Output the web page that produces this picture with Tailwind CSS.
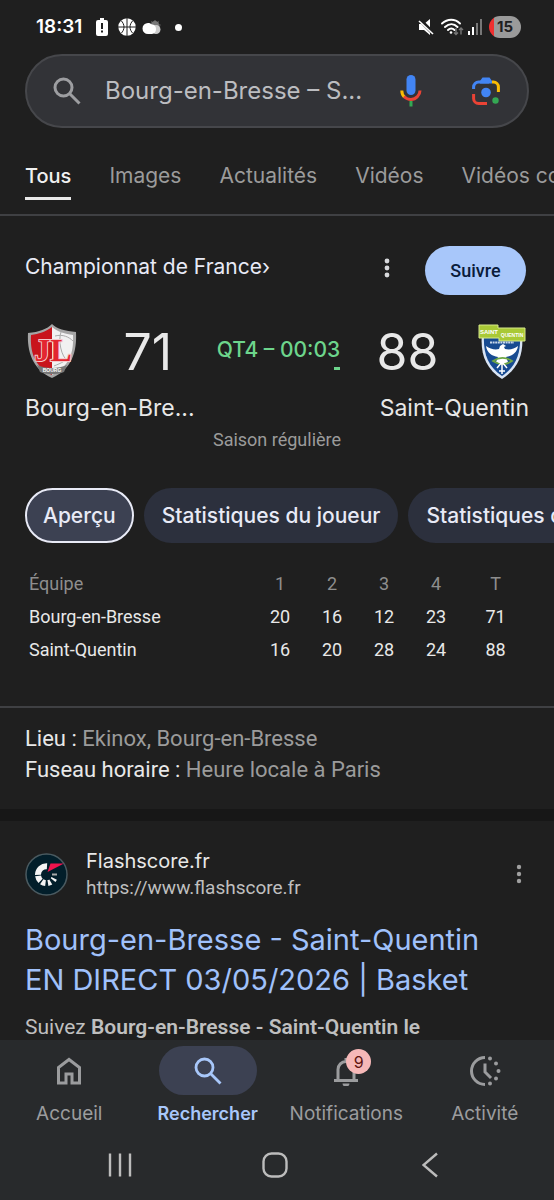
<!DOCTYPE html>
<html lang="fr" class="h-full">
  <head>
    <meta charset="utf-8" />
    <meta name="viewport" content="width=device-width, initial-scale=1" />
    <title>Bourg-en-Bresse – Saint-Quentin</title>
    <script src="https://cdn.jsdelivr.net/npm/@tailwindcss/browser@4"></script>
  </head>
  <body class="h-full bg-[#1f1f1f] font-['Roboto',sans-serif] text-[#e8e8e8]">
    <div class="flex h-full flex-col overflow-hidden">
      <!-- status bar -->
      <div class="flex h-[54px] shrink-0 items-center justify-between pl-9 pr-[33px] text-white">
        <div class="flex items-center">
          <span class="font-['Inter',sans-serif] text-[19px] font-semibold">18:31</span>
          <svg class="ml-3.5 h-[18px] w-3" viewBox="0 0 12 18">
            <path fill="#fff" d="M4 0h4v2h2a2 2 0 0 1 2 2v12a2 2 0 0 1-2 2H2a2 2 0 0 1-2-2V4a2 2 0 0 1 2-2h2z" />
            <path fill="#1f1f1f" d="M5 5h2v6H5zM5 12.500h2v2H5z" />
          </svg>
          <svg class="ml-2.5 size-[18px]" viewBox="0 0 18 18">
            <circle cx="9" cy="9" r="8.700" fill="#fff" />
            <path fill="none" stroke="#1f1f1f" stroke-width="1" d="M9 0v18M0 9h18M3 2.500c4 4 4 9 0 13M15 2.500c-4 4-4 9 0 13" />
          </svg>
          <svg class="ml-1.5 h-[18px] w-[19px]" viewBox="0 0 19 18">
            <circle cx="13" cy="7" r="4" fill="#777" />
            <path stroke="#777" d="M13 2v2M16.500 3.500l-1 1.500M9.500 3.500l1 1.500M18.500 7h-2" />
            <circle cx="14" cy="11.500" r="4.500" fill="#ccc" />
            <path fill="#fff" d="M6 16A5.500 5.500 0 0 1 6 5c1.500 0 2.500.4 3.500 1.200 3 .3 4.500 2.300 4.500 4.800 0 2.800-1.500 5-4 5z" />
          </svg>
          <span class="ml-3.5 size-[7px] rounded-full bg-white"></span>
        </div>
        <div class="flex items-center">
          <svg class="h-4 w-[17px]" viewBox="0 0 17 16">
            <path fill="#fff" d="M1 5h5l6-5v16l-6-5H1z" />
            <path stroke="#1f1f1f" stroke-width="4" d="M1 0l16 16" />
            <path stroke="#fff" stroke-width="1.600" d="M1 2l14 13" />
          </svg>
          <svg class="ml-1.5 h-[18px] w-[23px]" viewBox="0 0 23 18" fill="none">
            <path stroke="#fff" stroke-width="1.900" stroke-linecap="round" d="M1 5.500c5.500-5 13-5 18 0M4 9c4-3.600 9-3.600 12.500 0M7 12c2-2 4.500-2 6.500 0" />
            <circle cx="10" cy="14.500" r="1.300" fill="#fff" />
            <path stroke="#777" stroke-width="1.400" d="M15 10v6.500M13 14.500l2 2 2-2M20 16.500V10M18 12l2-2 2 2" />
          </svg>
          <svg class="ml-1 h-4 w-[15px]" viewBox="0 0 15 16">
            <path fill="#fff" d="M0 12h2v4H0zM4 8h2v8H4z" />
            <path fill="#777" d="M8 4h2v12H8zM12 0h2v16h-2z" />
          </svg>
          <span class="ml-1.5 rounded-full bg-linear-to-r from-[#ef3030] from-15% to-[#9a9a9a] to-15% px-2 font-['Inter',sans-serif] text-[15px] leading-[22px] font-bold text-[#1f1f1f]">15</span>
        </div>
      </div>

      <!-- search box -->
      <form class="mx-[25px] flex h-[74px] shrink-0 items-center rounded-full border-2 border-[#46474b] bg-[#323337] pl-6 pr-[26px]" onsubmit="return false">
        <svg class="h-8 w-8 shrink-0" viewBox="0 0 32 32" fill="none" stroke="#9d9ea1" stroke-width="3">
          <circle cx="12.500" cy="12.500" r="8.500" />
          <path d="M18.500 18.500l10 10" />
        </svg>
        <input class="ml-[22px] min-w-0 flex-1 bg-transparent font-['Inter',sans-serif] text-2xl text-[#bcbdc0] outline-none" type="text" aria-label="Rechercher" value="Bourg-en-Bresse – S..." />
        <button type="button" aria-label="Recherche vocale" class="ml-2 shrink-0">
          <svg class="h-8 w-6" viewBox="0 0 24 32" fill="none" stroke-width="3">
            <rect x="7.500" y="0" width="9" height="20" rx="4.500" fill="#4285f4" />
            <path stroke="#fbbc04" d="M2.800 15.500c0 3 1 5 2.600 6.600" />
            <path stroke="#ea4335" d="M5 21.500c4 4 10 4 13.500 0 1.700-1.700 2.500-3.500 2.500-6" />
            <path stroke="#34a853" d="M12 26v5.500" />
          </svg>
        </button>
        <button type="button" aria-label="Google Lens" class="ml-12 shrink-0">
          <svg class="h-[30px] w-[30px]" viewBox="0 0 30 30" fill="none" stroke-width="3">
            <path stroke="#4285f4" d="M2.600 13v-2a5 5 0 0 1 5-5H18" />
            <path fill="#4285f4" d="M9 5l2.500-3.500h7L21 5v2.500H9z" />
            <path stroke="#fbbc04" d="M21 6h1.400a5 5 0 0 1 5 5v5" />
            <path stroke="#ea4335" d="M2.600 18v4.400a5 5 0 0 0 5 5H16" />
            <circle cx="15" cy="16.500" r="4.800" fill="#4285f4" />
            <circle cx="24.500" cy="24.500" r="3.200" fill="#34a853" />
          </svg>
        </button>
      </form>

      <!-- result type tabs -->
      <nav class="flex h-[88px] shrink-0 gap-[38px] overflow-hidden border-b-2 border-[#3f4043] pl-[25px] pt-8 font-['Inter',sans-serif] text-[21px] leading-8 whitespace-nowrap text-[#9b9b9b]">
        <a href="#" class="h-10 border-b-3 border-[#e8e8e8] text-xl leading-8 font-medium text-[#f0f0f0]">Tous</a>
        <a href="#">Images</a>
        <a href="#">Actualités</a>
        <a href="#">Vidéos</a>
        <a href="#">Vidéos courtes</a>
      </nav>

      <main class="min-h-0 flex-1 overflow-hidden">
        <section>
          <div class="flex items-center pt-[30px] pl-[25px] pr-7">
            <a href="#" class="-mt-2 flex-1 font-['Inter',sans-serif] text-[21px] text-[#e8eaf6]">Championnat de France›</a>
            <button type="button" aria-label="Plus d'options" class="mr-8 -mt-1.5">
              <svg class="h-5 w-3" viewBox="0 0 12 20" fill="#d8d9dc">
                <circle cx="6" cy="3" r="2.400" /><circle cx="6" cy="10" r="2.400" /><circle cx="6" cy="17" r="2.400" />
              </svg>
            </button>
            <button type="button" class="h-[49px] w-[101px] rounded-full bg-[#a8c7fa] text-lg font-medium text-[#0a1c3a]">Suivre</button>
          </div>

          <div class="mt-[29px] flex items-center justify-between px-[25px]">
            <svg class="h-14 w-[54px]" viewBox="0 0 54 56">
              <path fill="#a5a5a5" d="M27 0c5 5 13 7 24 8 1 20-4 37-24 46C7 45 2 27 3 9 14 8 22 5 27 0z" />
              <path fill="#f1f1f1" d="M27 3c6 5 13 7 21 8 1 18-4 32-21 40z" />
              <path fill="#c8141c" d="M27 3C20 8 14 10 6 11c-1 18 4 32 21 40z" />
              <path fill="none" stroke="#aaa" d="M30 12c8-2 14 1 18 5M36 8c-3 8 0 25 7 29M29 42c7-3 13-5 17-12" />
              <text x="28" y="37" text-anchor="middle" font-family="Liberation Serif, serif" font-size="32" font-weight="700" fill="#e32630" stroke="#f3c9cb" stroke-width="2" paint-order="stroke">JL</text>
              <path fill="#777" d="M12 41c9 4 21 4 30 0l-3 7c-7 3-17 3-24 0z" />
              <text x="27" y="48" text-anchor="middle" font-family="Liberation Sans, sans-serif" font-size="5" font-weight="700" fill="#fff">BOURG</text>
            </svg>
            <span class="ml-2 font-['Inter',sans-serif] text-[50px] leading-[56px]">71</span>
            <span class="relative -mt-1 ml-2 font-['Inter',sans-serif] text-[21px] font-medium text-[#6dd58c]">QT4 – 00:03<span class="absolute right-0 -bottom-1 h-[3px] w-1.5 bg-[#6dd58c]"></span></span>
            <span class="font-['Inter',sans-serif] text-[50px] leading-[56px]">88</span>
            <svg class="h-14 w-[54px]" viewBox="0 0 54 56">
              <path fill="#d9e4f4" d="M7 9h40c2 20-3 35-20 46C10 44 5 29 7 9z" />
              <path fill="#174a91" d="M9 10h36c1 18-3 32-18 42C12 42 8 28 9 10z" />
              <path fill="#a9c936" stroke="#d7e98a" d="M4 1h19v3h27v13H24v-3H4z" />
              <text x="14" y="10" text-anchor="middle" font-family="Liberation Sans, sans-serif" font-size="6" font-weight="700" fill="#fff">SAINT</text>
              <text x="37" y="13" text-anchor="middle" font-family="Liberation Sans, sans-serif" font-size="5" font-weight="700" fill="#fff">QUENTIN</text>
              <path stroke="#c8d6ea" stroke-width="2" stroke-dasharray="2 .6" d="M15 18.500h24" />
              <path fill="#fff" d="M11 22c4 3 9 4 13 3l1-3 3-2 3 2-2 1 1 2c5 1 9 0 13-3-1 7-6 10-12 11l2 5-6 3-6-3 2-5c-6-1-11-4-12-11z" />
              <path fill="none" stroke="#6fa744" stroke-width="1.800" d="M18 37c6-4 13-4 19 0-6 4-13 4-19 0z" />
              <path stroke="#fff" stroke-width="1.500" d="M22 44l5-6 5 6M24 47h6M27 38v12" fill="none" />
            </svg>
          </div>
          <div class="mt-3 flex justify-between px-[25px] font-['Inter',sans-serif] text-[23px] leading-8">
            <span>Bourg-en-Bre...</span>
            <span>Saint-Quentin</span>
          </div>
          <p class="mt-0.5 text-center text-lg text-[#9b9b9b]">Saison régulière</p>

          <div class="mt-[34px] flex gap-2.5 overflow-hidden pl-[25px] font-['Inter',sans-serif] text-[21px] font-medium whitespace-nowrap text-[#e8eaf6]">
            <button type="button" class="h-[55px] shrink-0 rounded-full border-2 border-[#e8eaf6] bg-[#3c4152] px-4">Aperçu</button>
            <button type="button" class="h-[55px] shrink-0 rounded-full bg-[#2c303d] px-[18px]">Statistiques du joueur</button>
            <button type="button" class="h-[55px] shrink-0 rounded-full bg-[#2c303d] px-[18px]">Statistiques de l'équipe</button>
          </div>

          <div class="px-[25px] pt-6 pb-10">
            <table class="w-full table-fixed text-center text-lg leading-[33px]">
              <colgroup>
                <col /><col class="w-[52px]" /><col class="w-[52px]" /><col class="w-[52px]" /><col class="w-[52px]" /><col class="w-[67px]" />
              </colgroup>
              <thead class="text-[#8e8e8e]">
                <tr>
                  <th class="pl-1 text-left font-normal">Équipe</th>
                  <th class="font-normal">1</th>
                  <th class="font-normal">2</th>
                  <th class="font-normal">3</th>
                  <th class="font-normal">4</th>
                  <th class="font-normal">T</th>
                </tr>
              </thead>
              <tbody>
                <tr><td class="pl-1 text-left">Bourg-en-Bresse</td><td>20</td><td>16</td><td>12</td><td>23</td><td>71</td></tr>
                <tr><td class="pl-1 text-left">Saint-Quentin</td><td>16</td><td>20</td><td>28</td><td>24</td><td>88</td></tr>
              </tbody>
            </table>
          </div>

          <div class="border-t-2 border-[#3f4043] px-[25px] pt-[15px] pb-6 text-[22px] leading-[31px] text-[#9b9b9b]">
            <p><span class="text-[#e8e8e8]">Lieu :</span> Ekinox, Bourg-en-Bresse</p>
            <p><span class="text-[#e8e8e8]">Fuseau horaire :</span> Heure locale à Paris</p>
          </div>
        </section>

        <!-- web result -->
        <section class="border-t-12 border-[#171717] px-[25px] pt-[26px]">
          <div class="flex items-center">
            <svg class="size-[43px]" viewBox="0 0 43 43">
              <circle cx="21.500" cy="21.500" r="20.500" fill="#021e2a" stroke="#4a5a60" stroke-width="1.500" />
              <path fill="none" stroke="#f4f4f4" stroke-width="6" stroke-dasharray="14 1 5.500 1.500 4 2.500 3 3 2 10" d="M22 13.200A8.500 8.500 0 1 0 30 21.700" />
              <path stroke="#aaa" stroke-width="2" d="M27 21.500h5" />
              <path fill="#f0134d" d="M25.500 10.500H39L22.500 19z" />
            </svg>
            <div class="ml-[18px] flex-1">
              <div class="font-['Inter',sans-serif] text-xl leading-7">Flashscore.fr</div>
              <div class="text-[19px] leading-[26px] text-[#bfbfbf]">https://www.flashscore.fr</div>
            </div>
            <button type="button" aria-label="À propos de ce résultat" class="mr-1">
              <svg class="h-5 w-3" viewBox="0 0 12 20" fill="#a0a0a0">
                <circle cx="6" cy="3" r="2.200" /><circle cx="6" cy="10" r="2.200" /><circle cx="6" cy="17" r="2.200" />
              </svg>
            </button>
          </div>
          <a href="#" class="mt-[19px] block font-['Inter',sans-serif] text-[29px] leading-10 text-[#a0c1fb]">Bourg-en-Bresse - Saint-Quentin<br />EN DIRECT 03/05/2026 | Basket</a>
          <p class="mt-3 text-[21px] leading-[31px] text-[#bfbfbf]">Suivez <b class="font-semibold">Bourg-en-Bresse - Saint-Quentin le</b></p>
        </section>
      </main>

      <!-- app navigation -->
      <footer class="shrink-0 bg-[#282a2c]">
        <nav class="grid grid-cols-4 pt-1.5 text-center font-['Inter',sans-serif] text-[19px] leading-[38px] text-[#9b9c9e]">
          <a href="#" class="flex flex-col items-center">
            <span class="flex h-[49px] items-center">
              <svg class="h-7 w-[26px]" viewBox="0 0 26 28" fill="none" stroke="#9b9c9e" stroke-width="3">
                <path d="M2.500 26V10.500L13 2.500l10.500 8V26H16v-9h-6v9z" />
              </svg>
            </span>
            Accueil
          </a>
          <a href="#" class="flex flex-col items-center text-lg leading-[38px] font-semibold text-[#a8c7fa]">
            <span class="flex h-[49px] w-[98px] items-center justify-center rounded-full bg-[#3c4152]">
              <svg class="h-7 w-7" viewBox="0 0 28 28" fill="none" stroke="#a8c7fa" stroke-width="2.800">
                <circle cx="10.500" cy="10.500" r="8.500" />
                <path d="M16.500 16.500l10 10" />
              </svg>
            </span>
            Rechercher
          </a>
          <a href="#" class="flex flex-col items-center">
            <span class="relative flex h-[49px] items-center">
              <svg class="h-[30px] w-[26px]" viewBox="0 0 26 30" fill="none" stroke="#9b9c9e" stroke-width="3">
                <path d="M1 24.500h24M5 24V13.500a8 8 0 0 1 16 0V24M13 2v3" />
                <path fill="#9b9c9e" stroke="none" d="M9.500 27.500h7a3.500 3 0 0 1-7 0z" />
              </svg>
              <span class="absolute top-[3px] -right-3 flex size-[25px] items-center justify-center rounded-full bg-[#f6b8b8] text-base text-[#601410]">9</span>
            </span>
            Notifications
          </a>
          <a href="#" class="flex flex-col items-center">
            <span class="flex h-[49px] items-center">
              <svg class="h-8 w-8" viewBox="0 0 32 32" fill="none" stroke="#9b9c9e" stroke-width="3">
                <path d="M16 2.500a13.500 13.500 0 0 0 0 27M16 8.500v8.500l6 6" />
                <g fill="#9b9c9e" stroke="none">
                  <circle cx="21" cy="3.500" r="2" /><circle cx="27" cy="8.500" r="2" /><circle cx="29.500" cy="16" r="2" /><circle cx="27" cy="23.500" r="2" /><circle cx="21" cy="28.500" r="2" />
                </g>
              </svg>
            </span>
            Activité
          </a>
        </nav>

        <!-- system buttons -->
        <div class="grid h-[67px] grid-cols-3 justify-items-center pr-[46px] pb-1 pl-[42px]">
          <button type="button" aria-label="Applications récentes">
            <svg class="h-6 w-6" viewBox="0 0 24 24" stroke="#bcbcbc" stroke-width="2.400"><path d="M2 .5v23M12 .5v23M22 .5v23" /></svg>
          </button>
          <button type="button" aria-label="Écran d'accueil">
            <svg class="h-[26px] w-[26px]" viewBox="0 0 26 26" fill="none" stroke="#bcbcbc" stroke-width="2.400"><rect x="1.500" y="1.500" width="23" height="23" rx="8" /></svg>
          </button>
          <button type="button" aria-label="Retour">
            <svg class="h-[26px] w-4" viewBox="0 0 16 26" fill="none" stroke="#bcbcbc" stroke-width="2.400"><path d="M15 1.500L1.500 13 15 24.500" /></svg>
          </button>
        </div>
      </footer>
    </div>
  </body>
</html>
